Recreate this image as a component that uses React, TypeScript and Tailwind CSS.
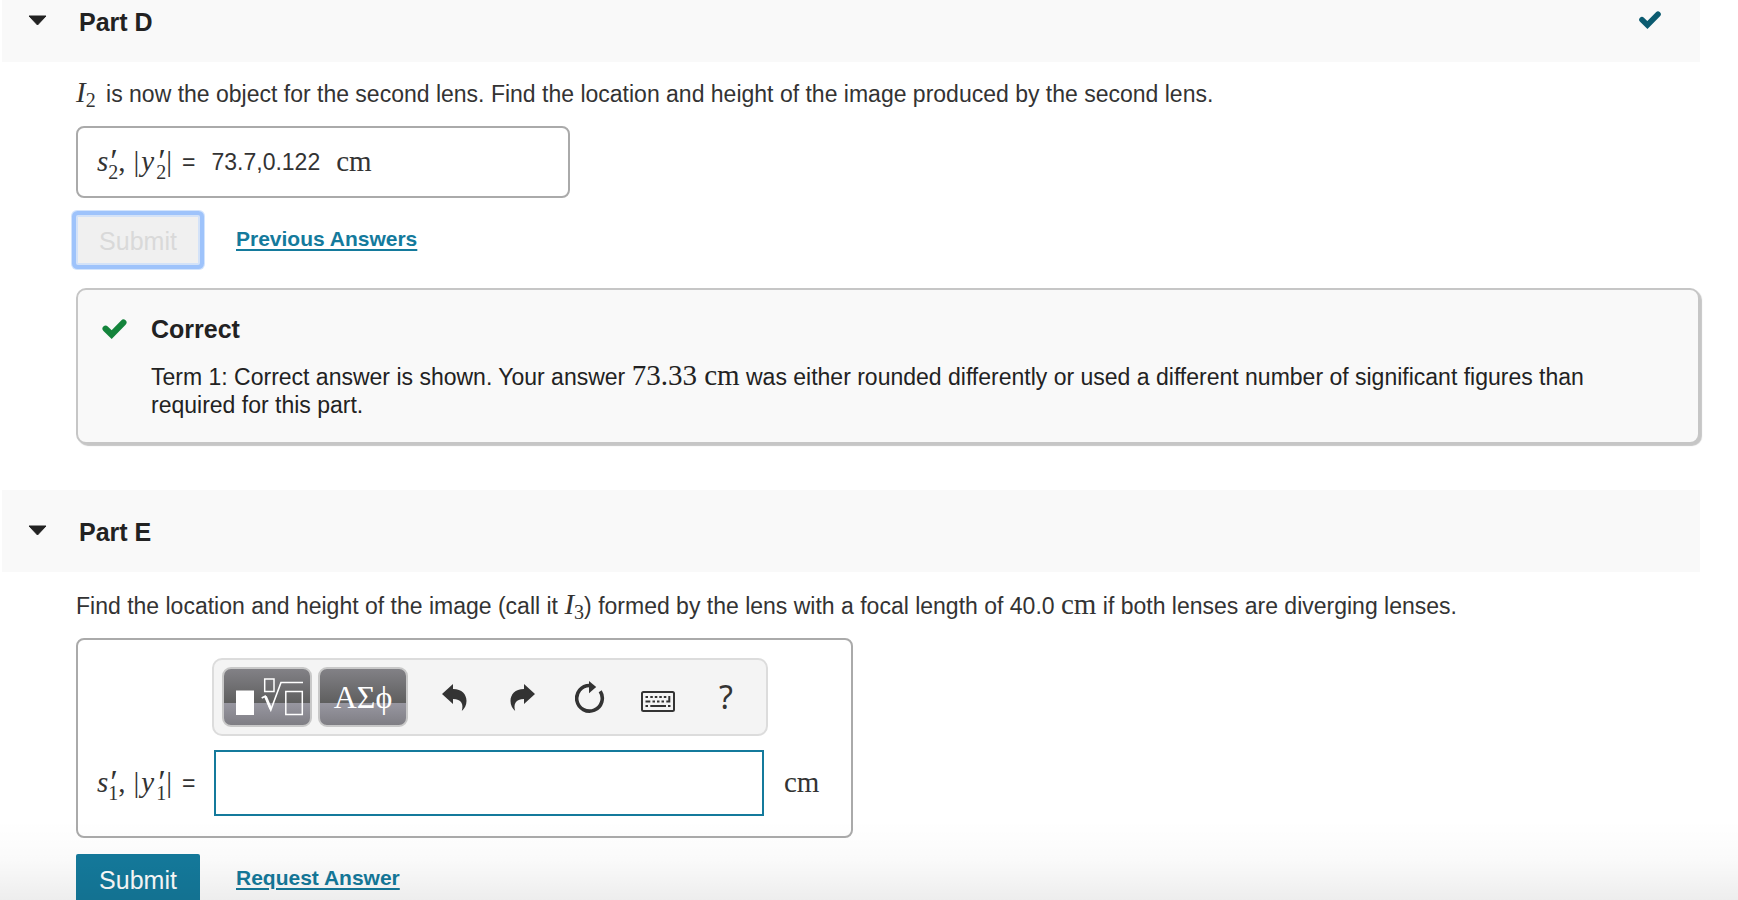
import type { ReactNode } from 'react'

function Check({ className }: { className: string }) {
  return (
    <svg viewBox="0 0 22 18" className={className} fill="none" stroke="currentColor" strokeWidth="5.600" strokeLinecap="round" aria-hidden="true">
      <path d="M3 8.800 L8.400 14 L19 3.200" strokeLinejoin="miter" />
    </svg>
  )
}

function UndoIcon({ className }: { className: string }) {
  return (
    <svg viewBox="0 0 25 27" className={className} fill="#333" aria-hidden="true">
      <path d="M0 10 L11 0 V5 C20 5 24.5 10.5 24.5 17 C24.5 21.500 22.500 24.500 19.800 27 C21.800 20 19.500 15 11 15 V20 Z" />
    </svg>
  )
}

function ResetIcon() {
  return (
    <svg viewBox="0 0 30 32" className="h-8 w-[30px]" aria-hidden="true">
      <path d="M25.2 10.3 A12.8 12.8 0 1 1 14.5 4.500" fill="none" stroke="#333" strokeWidth="3.600" />
      <path d="M14 0 L21.200 6 L14 12.300 Z" fill="#333" />
    </svg>
  )
}

function KeyboardIcon() {
  return (
    <svg viewBox="0 0 34 21" className="h-[21px] w-[34px]" fill="#333" aria-hidden="true">
      <rect x="1" y="1" width="32" height="19" rx="1.500" fill="none" stroke="#333" strokeWidth="2" />
      <path d="M4.500 5h2.500v2h-2.500z M9.300 5h2.500v2h-2.500z M13.800 5h2.500v2h-2.500z M18.300 5h2.500v2h-2.500z M22.800 5h2.500v2h-2.500z" />
      <path d="M27.300 5h2v6.500h-4v-2h2z M4.500 9.500h4.800v2h-4.800z M11.500 9.500h2.500v2h-2.500z M16 9.500h2.500v2h-2.500z M20.500 9.500h2.500v2h-2.500z" />
      <path d="M4.500 14h2.500v2h-2.500z M9.300 14h15.700v2h-15.700z M27 14h2.500v2h-2.500z" />
    </svg>
  )
}

function TemplateIcon() {
  return (
    <svg viewBox="0 0 84 56" className="h-14 w-[84px]" fill="none" stroke="white" aria-hidden="true">
      <rect x="11" y="21.500" width="18" height="24.500" fill="white" stroke="none" />
      <rect x="39.700" y="10" width="9.300" height="12.500" strokeWidth="1.500" />
      <rect x="60.800" y="22.500" width="16.500" height="23" strokeWidth="1.500" />
      <path d="M36.700 29 L40.200 27.200 L45.800 41 L56 13.500 H78" strokeWidth="1.600" />
      <path d="M40.500 27.500 L45.800 40" strokeWidth="2.800" />
    </svg>
  )
}

function PartHeader({ title, done }: { title: string; done?: boolean }) {
  return (
    <header className="ml-[2px] flex h-[82px] items-center bg-[#f9f9f9] pr-[39px] pl-[26px]">
      <button type="button" aria-label={`Toggle ${title}`} className="mr-8 pb-[2px]">
        <svg viewBox="0 0 19 11" className="h-[11px] w-[19px]" fill="#222" stroke="#222" strokeLinejoin="round" aria-hidden="true">
          <path d="M1 1 H18 L9.500 10 Z" />
        </svg>
      </button>
      <h2 className="pt-[2px] text-[25px] leading-8 font-bold text-[#222]">{title}</h2>
      {done && <Check className="mb-[2px] ml-auto h-[18px] w-[22px] text-[#0b5b70]" />}
    </header>
  )
}

function Serif({ children }: { children: ReactNode }) {
  return <span className="font-['Liberation_Serif',serif] text-[29px] leading-none">{children}</span>
}

function Scripts({ index }: { index: string }) {
  return (
    <span className="inline-flex flex-col pt-1 align-middle text-[20px]">
      <i className="h-3 w-[10px] text-[34px] leading-3">′</i>
      <span className="leading-[10px]">{index}</span>
    </span>
  )
}

function Quantity({ index }: { index: string }) {
  return (
    <span className="flex items-center whitespace-nowrap">
      <Serif>
        <i>s</i>
        <Scripts index={index} />
        <span className="mr-2">,</span>|<i className="px-[2px]">y</i>
        <Scripts index={index} />|
      </Serif>
      <span className="ml-[10px]">=</span>
    </span>
  )
}

function ActionLink({ children }: { children: ReactNode }) {
  return (
    <a href="#" className="ml-9 pt-[10px] text-[21px] leading-7 font-bold text-[#147a9c] underline decoration-2 underline-offset-[3px]">
      {children}
    </a>
  )
}

const paletteButton =
  'flex h-[60px] w-[90px] items-center justify-center rounded-[9px] border-2 border-[#c8c8c8] bg-[linear-gradient(#828186,#5f5f5f_60%,#9897a1_60%,#7f7e84)] text-white'
const toolButton = 'flex h-[60px] w-[68px] items-center justify-center text-[#333]'

export default function App() {
  return (
    <div className="relative h-screen overflow-hidden bg-white font-['Liberation_Sans',Arial,sans-serif] text-[23px] leading-7 text-[#333]">
      <main className="mr-[38px]">
        <section className="-mt-5">
          <PartHeader title="Part D" done />
          <div className="pt-4 pl-[76px]">
            <p>
              <Serif>
                <i>I</i>
                <sub className="mr-1 text-[20px]">2</sub>
              </Serif>{' '}
              is now the object for the second lens. Find the location and height of the image produced by the second lens.
            </p>
            <div className="mt-[18px] flex h-[72px] w-[494px] items-center rounded-lg border-2 border-[#aaa] pl-[19px]">
              <Quantity index="2" />
              <span className="ml-4">73.7,0.122</span>
              <span className="ml-4">
                <Serif>cm</Serif>
              </span>
            </div>
            <div className="mt-[17px] flex items-start">
              <button
                type="button"
                disabled
                className="h-[50px] w-[124px] rounded-xs border-2 border-[#d3e2f8] bg-[#f0f0f0] pt-[2px] text-[25px] text-[#d9d9d9] shadow-[0_0_0_4px_#9ec3fb,0_0_0_5px_#d3e4fc]"
              >
                Submit
              </button>
              <ActionLink>Previous Answers</ActionLink>
            </div>
            <div className="mt-[23px] flex rounded-[10px] border-2 border-[#c6c6c6] bg-[#f9f9f9] pt-[23px] pr-16 pb-[23px] pl-6 text-[#222] shadow-[2px_2px_1px_#c6c6c6]">
              <Check className="mt-[6px] mr-6 h-5 w-[25px] shrink-0 text-[#14843c]" />
              <div>
                <h3 className="text-[25px] leading-8 font-bold">Correct</h3>
                <p className="mt-4">
                  Term 1: Correct answer is shown. Your answer <Serif>73.33 cm</Serif> was either rounded differently or used a different number of
                  significant figures than required for this part.
                </p>
              </div>
            </div>
          </div>
        </section>

        <section className="mt-[46px]">
          <PartHeader title="Part E" />
          <div className="pt-[18px] pl-[76px]">
            <p>
              Find the location and height of the image (call it{' '}
              <Serif>
                <i>I</i>
                <sub className="text-[20px]">3</sub>
              </Serif>
              ) formed by the lens with a focal length of 40.0 <Serif>cm</Serif> if both lenses are diverging lenses.
            </p>
            <div className="mt-[18px] grid w-fit grid-cols-[115px_556px_auto] items-center gap-y-[14px] rounded-lg border-2 border-[#aaa] pt-[18px] pr-8 pb-5 pl-[19px]">
              <div className="col-start-2 flex h-[78px] items-center rounded-[10px] border-2 border-[#dcdcdc] bg-[#f4f4f4] pl-2">
                <button type="button" aria-label="Templates" className={paletteButton}>
                  <TemplateIcon />
                </button>
                <button type="button" aria-label="Symbols" className={`${paletteButton} mr-3 ml-[6px] font-['Liberation_Serif',serif] text-[32px]`}>
                  ΑΣϕ
                </button>
                <button type="button" aria-label="Undo" className={toolButton}>
                  <UndoIcon className="h-[27px] w-[25px]" />
                </button>
                <button type="button" aria-label="Redo" className={toolButton}>
                  <UndoIcon className="h-[27px] w-[25px] -scale-x-100" />
                </button>
                <button type="button" aria-label="Reset" className={toolButton}>
                  <ResetIcon />
                </button>
                <button type="button" aria-label="Keyboard" className={`${toolButton} pt-2`}>
                  <KeyboardIcon />
                </button>
                <button type="button" aria-label="Help" className={`${toolButton} font-['Noto_Sans',sans-serif] text-[32px]`}>
                  ?
                </button>
              </div>
              <label htmlFor="answer-e" className="col-start-1">
                <Quantity index="1" />
              </label>
              <input id="answer-e" type="text" className="mr-1 ml-[2px] h-[66px] border-2 border-[#147a9c] bg-white px-3 outline-none" />
              <span className="pl-4">
                <Serif>cm</Serif>
              </span>
            </div>
            <div className="mt-4 flex items-start">
              <button type="button" className="h-[50px] w-[124px] rounded-xs bg-[#147a9c] pt-[2px] text-[25px] text-white">
                Submit
              </button>
              <ActionLink>Request Answer</ActionLink>
            </div>
          </div>
        </section>
      </main>
      <div className="pointer-events-none absolute inset-x-0 bottom-0 h-20 bg-linear-to-b from-transparent via-black/2 to-black/7" />
    </div>
  )
}
